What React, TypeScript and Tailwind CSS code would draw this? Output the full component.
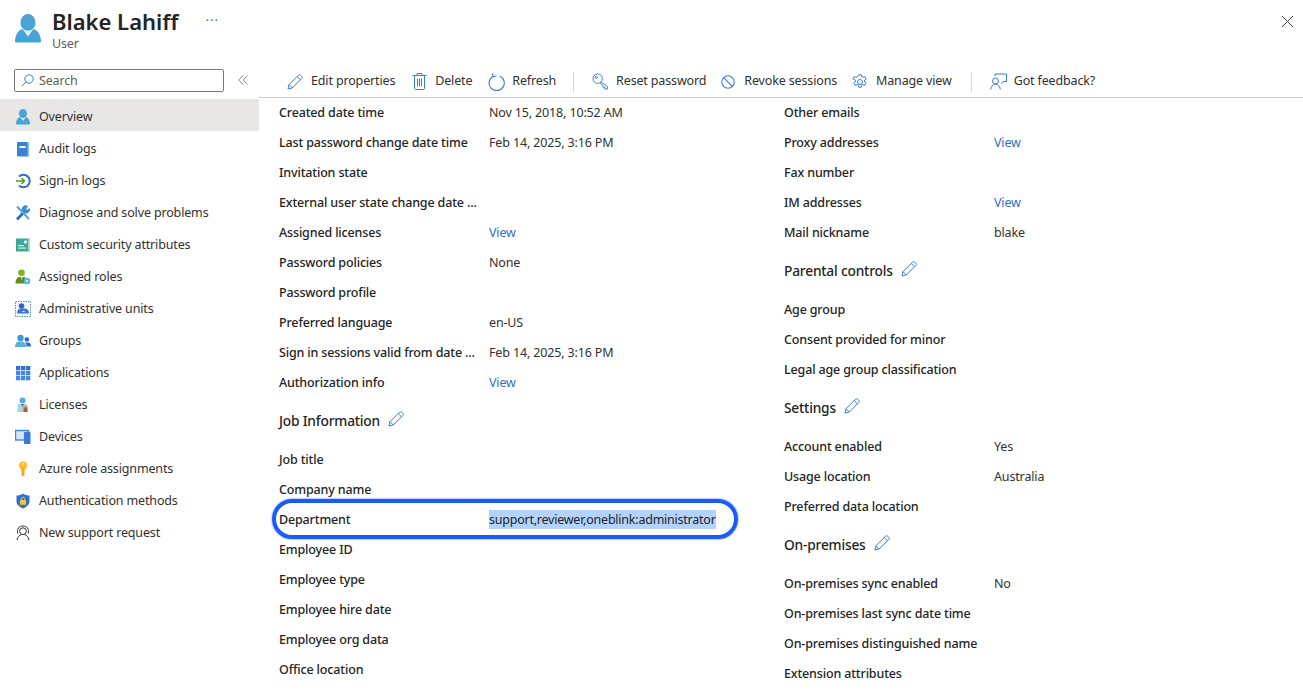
import React from "react";

const font = { fontFamily: '"Noto Sans", "Open Sans", sans-serif' };

function UserIcon({ size = 16, id = "ub" }: { size?: number; id?: string }) {
  return (
    <svg width={size} height={size * 1.1} viewBox="0 0 26 28.600">
      <defs>
        <linearGradient id={id} x1="0" y1="0" x2="0" y2="1">
          <stop offset="0" stopColor="#5b9fd0" />
          <stop offset="1" stopColor="#38a8dc" />
        </linearGradient>
      </defs>
      <ellipse cx="13" cy="8.500" rx="7.500" ry="8.500" fill={`url(#${id})`} />
      <path d="M1.500 28.600C.5 28.600 0 28 0 27c.3-6 3-10.500 7-12 1.700 1.300 3.800 2 6 2s4.300-.7 6-2c4 1.500 6.700 6 7 12 0 1-.5 1.600-1.500 1.600z" fill={`url(#${id})`} />
      <path d="M8 15.500c1.500.8 3.200 1.200 5 1.200s3.500-.4 5-1.200l-5 7z" fill="#e4f3fb" />
    </svg>
  );
}

const I = ({ children }: { children: React.ReactNode }) => (
  <svg width="16" height="16" viewBox="0 0 16 16">{children}</svg>
);

const navIcons: Record<string, React.ReactNode> = {
  Overview: <UserIcon size={14} id="ub2" />,
  "Audit logs": (
    <I>
      <rect x="2" y="1" width="12" height="14.500" rx="1.200" fill="#3b82d6" />
      <rect x="12.500" y="1" width="1.500" height="14.500" fill="#8cbcec" />
      <rect x="4.500" y="5" width="6" height="2" fill="#fff" />
    </I>
  ),
  "Sign-in logs": (
    <I>
      <path d="M4 3.500A6.300 6.300 0 1 1 4 12.500" fill="none" stroke="#2a6fc4" strokeWidth="2" />
      <path d="M1 8h8M6.500 5l3 3-3 3" fill="none" stroke="#5c9a1e" strokeWidth="1.600" />
    </I>
  ),
  "Diagnose and solve problems": (
    <I>
      <path d="M2 14.500 9.500 6.500" stroke="#1f6fb8" strokeWidth="2.600" />
      <path d="M8 7a3.700 3.700 0 0 1 5-5.500L11 3.500l1.500 1.500 2-2A3.700 3.700 0 0 1 9.500 8z" fill="#2f8fd0" />
      <path d="M2 1.500 14 14" stroke="#50a5dc" strokeWidth="2" />
    </I>
  ),
  "Custom security attributes": (
    <I>
      <rect x="1" y="1.500" width="14" height="13" fill="#3fa796" />
      <rect x="13" y="1.500" width="2" height="13" fill="#a5d8cf" />
      <rect x="3" y="8" width="6" height="1.200" fill="#d5efea" />
      <rect x="3" y="10.500" width="8" height="1.200" fill="#d5efea" />
      <circle cx="10.500" cy="5" r="1.700" fill="#e6f6f3" />
    </I>
  ),
  "Assigned roles": (
    <I>
      <circle cx="6.500" cy="3.800" r="3.300" fill="#7fb229" />
      <path d="M.5 14.500c0-4 2-6.500 3.500-6.500h5c1.500 0 3 2.500 3 6.500z" fill="#5e8e1f" />
      <path d="M6 8h1.500L6.700 11z" fill="#fff" />
      <circle cx="12" cy="12" r="3.300" fill="#59b4d9" />
      <circle cx="12" cy="12" r="1.200" fill="#cde9f5" />
    </I>
  ),
  "Administrative units": (
    <I>
      <rect x=".5" y=".5" width="15" height="15" fill="#f4f8fd" stroke="#5a8fd8" strokeDasharray="1.500 1" />
      <circle cx="6.500" cy="5" r="2.800" fill="#2f66c4" />
      <path d="M2 12.500c0-3.500 1.500-5 4-5h3.500c2.500 0 4.500 1.500 4.500 5z" fill="#3f78d4" />
      <rect x="7.500" y="10" width="2" height="1" fill="#fff" />
    </I>
  ),
  Groups: (
    <I>
      <circle cx="5.500" cy="5" r="3.200" fill="#3f9fd4" />
      <circle cx="11.800" cy="6.500" r="2.300" fill="#2b6fcf" />
      <path d="M0 14c0-3.500 2-5.500 4-5.500h3c2 0 4 2 4 5.500z" fill="#57b0dc" />
      <path d="M10 9.500h3.500c1.500 0 2.500 1.500 2.500 4h-4.500c0-1.500-.5-3-1.500-4z" fill="#2b6fcf" />
    </I>
  ),
  Applications: (
    <I>
      {[1, 6, 11].flatMap((x) =>
        [1, 6, 11].map((y) => (
          <rect key={`${x}-${y}`} x={x} y={y} width="4.300" height="4.300" fill={y === 1 ? "#2f6fd6" : "#4487e4"} />
        ))
      )}
    </I>
  ),
  Licenses: (
    <I>
      <circle cx="7.500" cy="3.500" r="3" fill="#59a9d8" />
      <path d="M2.500 15V8.500c0-1 .8-1.800 1.800-1.800h6.400c1 0 1.800.8 1.800 1.800V15z" fill="#a9d4ec" />
      <path d="M6 7h3L7.500 10z" fill="#2f7fb8" />
      <rect x="8.500" y="10" width="4" height="5" fill="#b0582e" />
      <circle cx="10.500" cy="10" r="1.500" fill="#d88b4a" />
    </I>
  ),
  Devices: (
    <I>
      <rect x=".5" y="1.500" width="13" height="9.500" fill="#d6e6fa" stroke="#3f86e0" strokeWidth="1.400" />
      <rect x="9" y="3" width="6.500" height="12" rx=".8" fill="#3a78dc" />
    </I>
  ),
  "Azure role assignments": (
    <I>
      <circle cx="8" cy="4.500" r="4" fill="#fdbd1e" />
      <path d="M6.500 7h3v7L8 15.800 6.500 14z" fill="#f4a81a" />
      <circle cx="8" cy="2.800" r="1" fill="#fff3c4" />
    </I>
  ),
  "Authentication methods": (
    <I>
      <path d="M8 .5c2 1.500 4 2 6.500 2v6c0 3-3 5.500-6.500 7-3.500-1.500-6.500-4-6.500-7v-6C4 2.500 6 2 8 .5z" fill="#2f6fd4" />
      <rect x="5" y="7" width="6" height="4.800" rx=".6" fill="#fcc22e" />
      <path d="M6.300 7V5.800a1.700 1.700 0 0 1 3.400 0V7" fill="none" stroke="#fcc22e" strokeWidth="1" />
    </I>
  ),
  "New support request": (
    <I>
      <circle cx="8" cy="6.200" r="3.400" fill="none" stroke="#333" strokeWidth="1" />
      <path d="M2.800 8.500C1.500 4 4 1 8 1s6.500 3 5.200 7.500" fill="none" stroke="#333" strokeWidth="1" />
      <path d="M2 15c.3-2.800 2.500-5 4.500-5.500M14 15c-.3-2.800-2.500-5-4.500-5.500" fill="none" stroke="#333" strokeWidth="1" />
    </I>
  ),
};

const nav = Object.keys(navIcons);

const blue = "#3a7bd5";

const Pencil = ({ size = 16 }: { size?: number }) => (
  <svg width={size} height={size} viewBox="0 0 16 16" fill="none" stroke={blue} strokeWidth="1">
    <path d="M1 15l1-4.300L11.500 1.200c.6-.6 1.600-.6 2.200 0l1.100 1.100c.6.600.6 1.600 0 2.200L5.300 14z" />
    <path d="M2 10.700 5.300 14M10.200 2.500l3.300 3.300" />
  </svg>
);

const toolIcons: Record<string, React.ReactNode> = {
  Trash: (
    <svg width="15" height="17" viewBox="0 0 15 17" fill="none" stroke={blue} strokeWidth="1">
      <path d="M.5 2.500h14M5 2.500V.5h5v2M2.500 2.500v12.700c0 .7.400 1.300 1.100 1.300h7.800c.7 0 1.100-.6 1.100-1.300V2.500M5.500 5.500v8M7.500 5.500v8M9.500 5.500v8" />
    </svg>
  ),
  Refresh: (
    <svg width="17" height="18" viewBox="0 0 17 18" fill="none" stroke={blue} strokeWidth="1.100">
      <path d="M5 3.400A7.600 7.600 0 1 0 11.500 3" />
      <path d="M4.200 .5 5.300 3.700 8.500 3" />
    </svg>
  ),
  Key: (
    <svg width="17" height="17" viewBox="0 0 18 18" fill="none" stroke={blue} strokeWidth="1">
      <circle cx="6" cy="6" r="5" />
      <circle cx="4.500" cy="4.500" r="1.200" />
      <path d="M9.500 9.500 16.500 14.500V17h-3v-2h-2v-2l-3-2" />
    </svg>
  ),
  Revoke: (
    <svg width="14" height="14" viewBox="0 0 14 14" fill="none" stroke={blue} strokeWidth="1.100">
      <circle cx="7" cy="7" r="6.200" />
      <path d="M2.600 2.600l8.800 8.800" />
    </svg>
  ),
  Gear: (
    <svg width="16" height="16" viewBox="0 0 16 16" fill="none" stroke={blue} strokeWidth="1">
      <circle cx="8" cy="8" r="2.500" />
      <path d="M6.700.8h2.600l.4 2 1.200.6 1.900-.8 1.300 2.200-1.500 1.300v1.800l1.500 1.300-1.300 2.200-1.900-.8-1.200.7-.4 1.900H6.700l-.4-1.900-1.200-.7-1.900.8-1.300-2.200 1.500-1.300V6.100L.9 4.800l1.300-2.200 1.900.8 1.200-.6z" />
    </svg>
  ),
  Feedback: (
    <svg width="17" height="17" viewBox="0 0 17 17" fill="none" stroke={blue} strokeWidth="1">
      <path d="M5 3V1h11.500v7.500h-3l-2.500 2" />
      <circle cx="5.500" cy="8" r="3" />
      <path d="M.7 16.500c.3-3 2.200-5.500 4.800-5.500s4.500 2.500 4.800 5.500" />
    </svg>
  ),
};

type Row =
  | { h: string }
  | { l: string; v?: string; link?: boolean; sel?: boolean };

const left: Row[] = [
  { l: "Created date time", v: "Nov 15, 2018, 10:52 AM" },
  { l: "Last password change date time", v: "Feb 14, 2025, 3:16 PM" },
  { l: "Invitation state" },
  { l: "External user state change date ..." },
  { l: "Assigned licenses", v: "View", link: true },
  { l: "Password policies", v: "None" },
  { l: "Password profile" },
  { l: "Preferred language", v: "en-US" },
  { l: "Sign in sessions valid from date ...", v: "Feb 14, 2025, 3:16 PM" },
  { l: "Authorization info", v: "View", link: true },
  { h: "Job Information" },
  { l: "Job title" },
  { l: "Company name" },
  { l: "Department", v: "support,reviewer,oneblink:administrator", sel: true },
  { l: "Employee ID" },
  { l: "Employee type" },
  { l: "Employee hire date" },
  { l: "Employee org data" },
  { l: "Office location" },
];

const right: Row[] = [
  { l: "Other emails" },
  { l: "Proxy addresses", v: "View", link: true },
  { l: "Fax number" },
  { l: "IM addresses", v: "View", link: true },
  { l: "Mail nickname", v: "blake" },
  { h: "Parental controls" },
  { l: "Age group" },
  { l: "Consent provided for minor" },
  { l: "Legal age group classification" },
  { h: "Settings" },
  { l: "Account enabled", v: "Yes" },
  { l: "Usage location", v: "Australia" },
  { l: "Preferred data location" },
  { h: "On-premises" },
  { l: "On-premises sync enabled", v: "No" },
  { l: "On-premises last sync date time" },
  { l: "On-premises distinguished name" },
  { l: "Extension attributes" },
];

function Column({ rows, className }: { rows: Row[]; className: string }) {
  return (
    <div className={className}>
      {rows.map((r) =>
        "h" in r ? (
          <div key={r.h} className="h-[47px] flex items-center gap-[8px] text-[13.75px] tracking-[-0.2px] font-medium text-[#242424]">
            <span>{r.h}</span>
            <span className="mb-[6px]">
              <Pencil />
            </span>
          </div>
        ) : (
          <div key={r.l} className="relative h-[30px] flex items-center text-[12.5px] tracking-[-0.15px]">
            {r.sel && (
              <div className="absolute left-[-7px] top-[-6px] h-[40px] w-[466px] rounded-[20px] border-[4px] border-[#1a5cf5] shadow-[0_0_2px_#1a5cf5]" />
            )}
            <div className="w-[210px] shrink-0 font-medium text-[#242424] whitespace-nowrap">{r.l}</div>
            {r.v && (
              <div className={r.link ? "text-[#2f6fc4]" : "text-[#323130] whitespace-nowrap"}>
                <span className={r.sel ? "inline-block h-[19px] w-[227px] leading-[19px] bg-[#b3d3fd] text-[#242424] tracking-[-0.23px]" : ""}>{r.v}</span>
              </div>
            )}
          </div>
        )
      )}
    </div>
  );
}

function Tool({ icon, label, gap = "gap-[8px]", className = "" }: { icon: React.ReactNode; label: string; gap?: string; className?: string }) {
  return (
    <div className={`flex items-center ${gap} ${className}`}>
      {icon}
      <span className="text-[12.5px] tracking-[-0.15px] text-[#323130] whitespace-nowrap">{label}</span>
    </div>
  );
}

export default function App() {
  return (
    <div style={font} className="w-[1303px] h-[690px] overflow-hidden bg-white flex flex-col text-[#242424]">
      <header className="h-[60px] shrink-0 flex items-start pl-[15px] pr-[9px] pt-[8px]">
        <div className="mt-[6px]">
          <UserIcon size={26} />
        </div>
        <div className="ml-[11px]">
          <div className="text-[22px] leading-[26px] font-semibold text-[#242424]">Blake Lahiff</div>
          <div className="text-[12.5px] leading-[16px] tracking-[-0.15px] text-[#605e5c] mt-[2px]">User</div>
        </div>
        <div className="ml-[27px] mt-[4px] text-[13px] leading-[16px] text-[#605e5c] tracking-[1px]">···</div>
        <svg className="ml-auto mt-[7px]" width="13" height="13" viewBox="0 0 13 13" stroke="#444" strokeWidth="1">
          <path d="M1 1l11 11M12 1 1 12" />
        </svg>
      </header>
      <div className="flex flex-1 min-h-0">
        <aside className="w-[259px] shrink-0">
          <div className="h-[39px] flex items-start pl-[14px] pt-[9px]">
            <div className="w-[210px] h-[23px] border border-[#7a7a7a] rounded-[2px] flex items-center pl-[6px] gap-[5px]">
              <svg width="13" height="13" viewBox="0 0 13 13" fill="none" stroke="#3a7bd5" strokeWidth="1">
                <circle cx="8" cy="5" r="4.200" />
                <path d="M5 8 .8 12.200" />
              </svg>
              <span className="text-[12.5px] leading-[16px] pt-[1px] tracking-[-0.15px] text-[#605e5c]">Search</span>
            </div>
            <svg className="ml-[14px] mt-[6px]" width="10" height="10" viewBox="0 0 10 10" fill="none" stroke="#8a8886" strokeWidth="1">
              <path d="M5 .5.700 5 5 9.500M9.500.5 5.200 5l4.300 4.500" />
            </svg>
          </div>
          {nav.map((n, i) => (
            <div key={n} className={`h-[32px] pt-[4px] flex items-center pl-[15px] gap-[8px] text-[12.5px] tracking-[-0.15px] text-[#323130] ${i === 0 ? "bg-[#e8e7e6]" : ""}`}>
              <span className="w-[16px] flex justify-center">{navIcons[n]}</span>
              <span className="whitespace-nowrap">{n}</span>
            </div>
          ))}
        </aside>
        <main className="flex-1 min-w-0 flex flex-col">
          <div className="h-[38px] shrink-0 border-b border-[#cfcfcf] flex items-center pl-[28px] pt-[6px]">
            <Tool icon={<Pencil size={16} />} label="Edit properties" />
            <Tool icon={toolIcons.Trash} label="Delete" className="ml-[17px]" />
            <Tool icon={toolIcons.Refresh} label="Refresh" className="ml-[16px]" gap="gap-[7px]" />
            <div className="w-px h-[20px] bg-[#d5d5d5] ml-[17px]" />
            <Tool icon={toolIcons.Key} label="Reset password" className="ml-[18px]" gap="gap-[7px]" />
            <Tool icon={toolIcons.Revoke} label="Revoke sessions" className="ml-[15px]" gap="gap-[9px]" />
            <Tool icon={toolIcons.Gear} label="Manage view" className="ml-[15px]" gap="gap-[8px]" />
            <div className="w-px h-[20px] bg-[#d5d5d5] ml-[19px]" />
            <Tool icon={toolIcons.Feedback} label="Got feedback?" className="ml-[18px]" gap="gap-[7px]" />
          </div>
          <div className="flex pl-[20px]">
            <Column rows={left} className="w-[505px] shrink-0" />
            <Column rows={right} className="w-[500px] shrink-0" />
          </div>
        </main>
      </div>
    </div>
  );
}
